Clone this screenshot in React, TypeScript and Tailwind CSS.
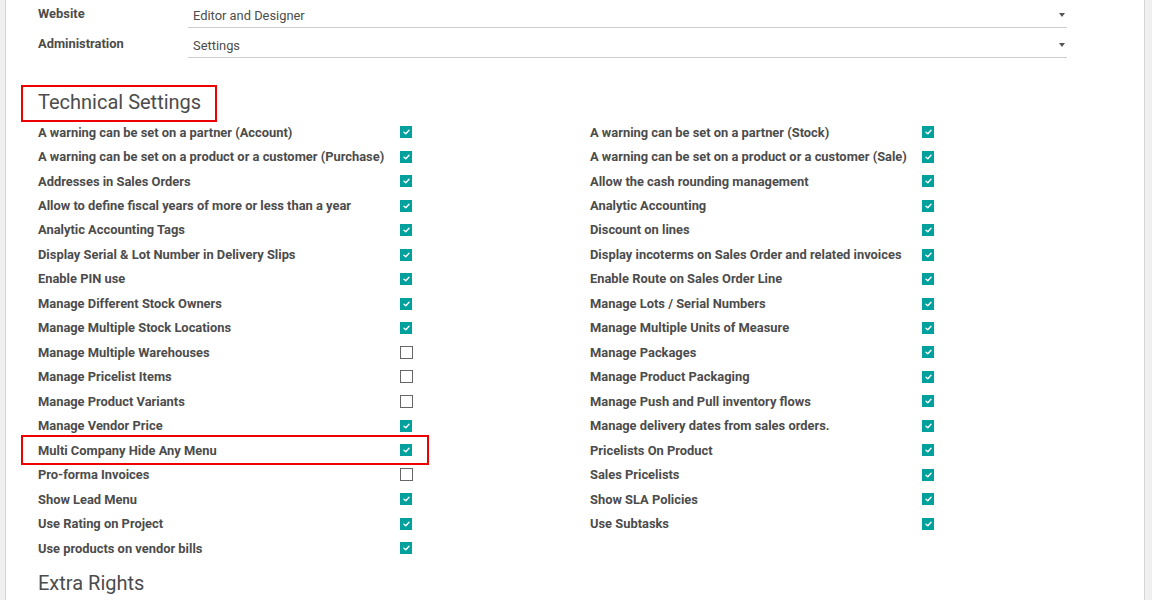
import React from "react";

type Setting = { label: string; checked: boolean; marked?: boolean };

const leftSettings: Setting[] = [
  { label: "A warning can be set on a partner (Account)", checked: true },
  { label: "A warning can be set on a product or a customer (Purchase)", checked: true },
  { label: "Addresses in Sales Orders", checked: true },
  { label: "Allow to define fiscal years of more or less than a year", checked: true },
  { label: "Analytic Accounting Tags", checked: true },
  { label: "Display Serial & Lot Number in Delivery Slips", checked: true },
  { label: "Enable PIN use", checked: true },
  { label: "Manage Different Stock Owners", checked: true },
  { label: "Manage Multiple Stock Locations", checked: true },
  { label: "Manage Multiple Warehouses", checked: false },
  { label: "Manage Pricelist Items", checked: false },
  { label: "Manage Product Variants", checked: false },
  { label: "Manage Vendor Price", checked: true },
  { label: "Multi Company Hide Any Menu", checked: true, marked: true },
  { label: "Pro-forma Invoices", checked: false },
  { label: "Show Lead Menu", checked: true },
  { label: "Use Rating on Project", checked: true },
  { label: "Use products on vendor bills", checked: true },
];

const rightSettings: Setting[] = [
  { label: "A warning can be set on a partner (Stock)", checked: true },
  { label: "A warning can be set on a product or a customer (Sale)", checked: true },
  { label: "Allow the cash rounding management", checked: true },
  { label: "Analytic Accounting", checked: true },
  { label: "Discount on lines", checked: true },
  { label: "Display incoterms on Sales Order and related invoices", checked: true },
  { label: "Enable Route on Sales Order Line", checked: true },
  { label: "Manage Lots / Serial Numbers", checked: true },
  { label: "Manage Multiple Units of Measure", checked: true },
  { label: "Manage Packages", checked: true },
  { label: "Manage Product Packaging", checked: true },
  { label: "Manage Push and Pull inventory flows", checked: true },
  { label: "Manage delivery dates from sales orders.", checked: true },
  { label: "Pricelists On Product", checked: true },
  { label: "Sales Pricelists", checked: true },
  { label: "Show SLA Policies", checked: true },
  { label: "Use Subtasks", checked: true },
];

function Checkbox({ checked }: { checked: boolean }) {
  if (!checked) {
    return <span className="block w-[13px] h-[13px] border border-[#666] bg-white" />;
  }
  return (
    <span className="flex items-center justify-center w-[12px] h-[12px] bg-[#00a09d]">
      <svg width="7" height="6" viewBox="0 0 7 6" fill="none">
        <path d="M1 3.2 L2.8 4.8 L6 1.2" stroke="white" strokeWidth="1.4" strokeLinecap="round" strokeLinejoin="round" />
      </svg>
    </span>
  );
}

function SettingRow({ item, labelWidth }: { item: Setting; labelWidth: string }) {
  return (
    <div className="relative flex items-center h-[24.47px]">
      {item.marked && (
        <div className="absolute left-[-17px] top-[-3px] w-[408px] h-[30px] border-2 border-[#ee0000] pointer-events-none" />
      )}
      <span className={`${labelWidth} font-bold text-[12.88px] text-[#4c4c4c] whitespace-nowrap`}>{item.label}</span>
      <Checkbox checked={item.checked} />
    </div>
  );
}

function SelectField({ label, value }: { label: string; value: string }) {
  return (
    <div className="flex h-[30px]">
      <div className="w-[150px] pt-[4px] font-bold text-[12.88px] text-[#4c4c4c]">{label}</div>
      <div className="relative w-[879px] h-[28px] border-b border-[#ccc] pl-[5px] pt-[6px] text-[12.88px] text-[#4c4c4c]">
        {value}
        <span className="absolute right-[2px] top-[13px] w-0 h-0 border-x-[3px] border-x-transparent border-t-[4px] border-t-[#555]" />
      </div>
    </div>
  );
}

export default function App() {
  return (
    <div className="h-[600px] overflow-hidden bg-[#f0f0f0] pl-[5px] pr-[7px]" style={{ fontFamily: "Roboto, 'Liberation Sans', sans-serif" }}>
      <div className="h-full bg-white border-x border-[#d4d4d4] pl-[32px]">
        <SelectField label="Website" value="Editor and Designer" />
        <SelectField label="Administration" value="Settings" />

        <div className="relative mt-[25px] h-[36px] flex items-center">
          <div className="absolute left-[-17px] top-0 w-[196px] h-[37px] border-2 border-[#ee0000]" />
          <h2 className="text-[20px] text-[#4c4c4c] leading-none mt-[-3px]">Technical Settings</h2>
        </div>

        <div className="flex mt-[-1px]">
          <div className="w-[552px]">
            {leftSettings.map((s) => (
              <SettingRow key={s.label} item={s} labelWidth="w-[362px]" />
            ))}
          </div>
          <div>
            {rightSettings.map((s) => (
              <SettingRow key={s.label} item={s} labelWidth="w-[332px]" />
            ))}
          </div>
        </div>

        <h2 className="mt-[13px] text-[20px] text-[#4c4c4c] leading-none">Extra Rights</h2>
      </div>
    </div>
  );
}
